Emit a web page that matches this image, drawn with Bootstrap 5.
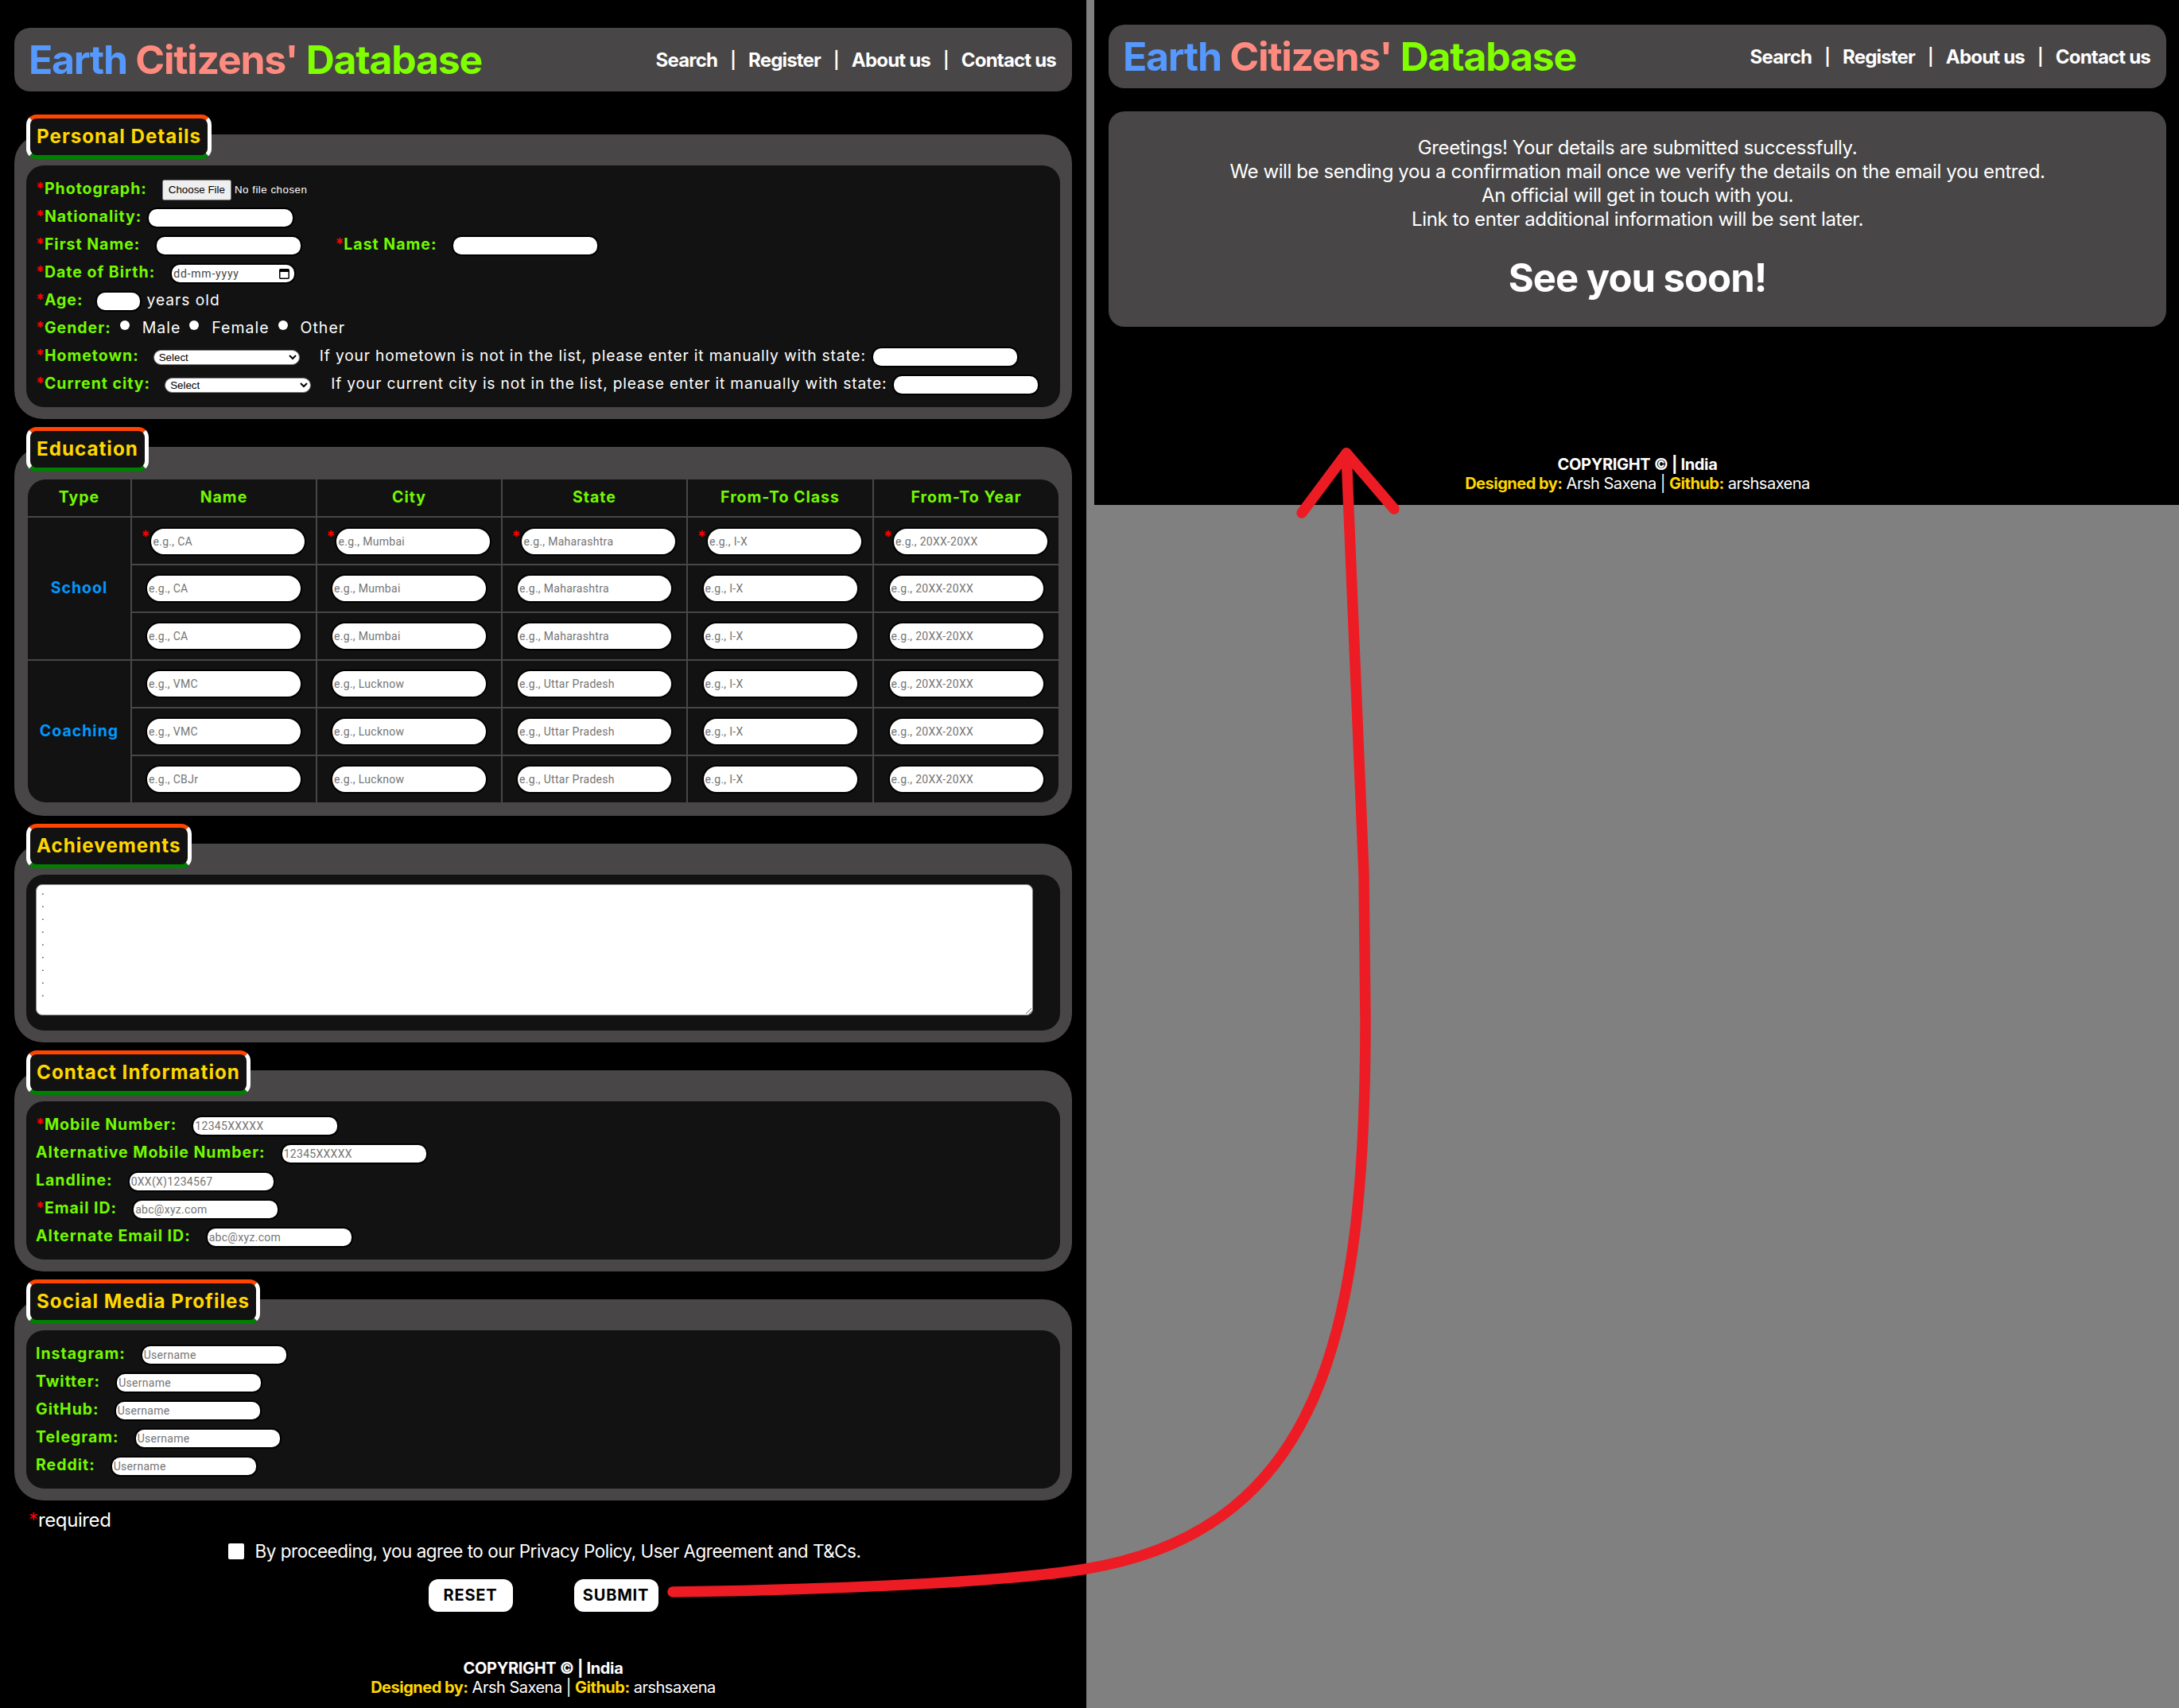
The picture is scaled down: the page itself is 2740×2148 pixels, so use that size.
<!DOCTYPE html>
<html lang="en">
<head>
  <meta charset="UTF-8">
  <title>Earth Citizens' Database</title>
  <meta name="viewport" content="width=device-width, initial-scale=1">
  <link href="https://cdn.jsdelivr.net/npm/bootstrap@5.3.3/dist/css/bootstrap.min.css" rel="stylesheet">
  <style>
    body { width: 2740px; height: 2148px; background: #808080; font-family: Inter, "Liberation Sans", sans-serif; color: #fff; position: relative; overflow: hidden; }
    .pane-left { width: 1366px; height: 2148px; background: #000; padding: 35px 18px 0; flex: none; }
    .pane-right { width: 1364px; height: 635px; background: #000; padding: 31px 16px 0 18px; margin-left: 10px; flex: none; }

    .top-bar { height: 80px; background: #484646; border-radius: 20px; padding: 0 20px 0 18px; }
    .brand { font-size: 50px; font-weight: 700; letter-spacing: -1.3px; line-height: 1; }
    .c-blue { color: #5599ff; }
    .c-salmon { color: #ff8a80; }
    .c-lime { color: #7fff00; }
    .top-links { font-size: 24px; font-weight: 700; letter-spacing: -0.8px; gap: 16px; padding-top: 2px; }
    .top-links a { color: #fff; text-decoration: none; }
    .top-links .sep { color: #fff; font-size: 21px; font-weight: 600; }

    .sec-block { margin-top: 10px; }
    .sec-block.first { margin-top: 29px; }
    .sec-title { position: relative; z-index: 1; width: fit-content; height: 56px; margin: 0 0 -31px 15px; padding: 0 8px; font-size: 24.2px; font-weight: 700; letter-spacing: 1px; line-height: 46px; color: #ffd700; background: #121212; border: 5px solid #fff; border-top-color: #ff4500; border-bottom-color: #008000; border-radius: 13px; }
    .sec-panel { background: #484646; border-radius: 36px; padding: 39px 15px 15px; }
    .sec-inner { background: #121212; border-radius: 22px; padding: 12px; }

    .fld-row { height: 35px; font-size: 19.5px; letter-spacing: 1px; white-space: nowrap; }
    .lbl { font-weight: 700; color: #72f900; }
    .star { color: #f00; font-weight: 700; letter-spacing: 0; }
    .fld { width: 185px; height: 26px; margin: 3px 0 0 19px; padding: 0 2px; background: #fff; border: 2px solid #000; border-radius: 12px; font-family: Roboto, sans-serif; font-size: 14px; letter-spacing: 0.3px; outline: 0; }
    .fld.tight { margin-left: 7px; }
    .fld.age { width: 58px; margin-left: 16px; }
    .after-first { margin-left: 41px; }
    .file-pick { margin: 3px 0 0 19px; width: 190px; font-family: "Liberation Sans", sans-serif; font-size: 13.33px; letter-spacing: 0.5px; color: #fff; }
    .file-pick::file-selector-button { letter-spacing: 0; padding: 1px 6px; }
    .date-box { width: 158px; height: 26px; margin: 3px 0 0 19px; padding: 0 6px 0 2px; background: #fff; border: 2px solid #000; border-radius: 12px; }
    .date-box input { width: 125px; border: 0; padding: 0; background: none; font-family: Roboto, sans-serif; font-size: 14px; letter-spacing: 0.8px; color: #444; outline: 0; }
    .pick-radio { appearance: none; width: 12px; height: 12px; margin: 0 0 8px 11px; background: #fff; border-radius: 50%; flex: none; }
    .opt-text { margin-left: 16px; }
    .pick-sel { width: 184px; height: 19px; margin: 3px 0 0 18px; padding: 0 2px; background: #fff; border: 1px solid #777; border-radius: 10px; font-family: "Liberation Sans", sans-serif; font-size: 13.33px; letter-spacing: 0; color: #000; }
    .note-text { margin-left: 25px; font-size: 19.2px; letter-spacing: 0.85px; }
    .age-unit { margin-left: 6px; font-size: 19.2px; }

    .edu-grid { table-layout: fixed; width: 1300px; border-collapse: separate; border-spacing: 2px; font-size: 19.5px; letter-spacing: 1px; }
    .edu-grid th, .edu-grid td { background: #121212; padding: 0; text-align: center; vertical-align: middle; }
    .edu-grid th { height: 46px; font-weight: 700; color: #72f900; }
    .edu-grid td { height: 58px; white-space: nowrap; }
    .edu-grid td.kind { font-weight: 700; color: #0099ff; }
    .edu-grid tr:first-child th:first-child { border-top-left-radius: 22px; }
    .edu-grid tr:first-child th:last-child { border-top-right-radius: 22px; }
    .edu-grid td.kind.end { border-bottom-left-radius: 22px; }
    .edu-grid tbody tr:last-child td:last-child { border-bottom-right-radius: 22px; }
    .cell-in { width: 197px; height: 36px; padding: 0 2px; background: #fff; border: 2px solid #000; border-radius: 18px; font-family: Roboto, sans-serif; font-size: 14px; letter-spacing: 0.3px; vertical-align: middle; outline: 0; }
    .cell-star { vertical-align: 4px; margin-right: 0; }

    .ach-box { display: block; width: 1254px; height: 165px; padding: 0 6px; background: #fff; border: 1px solid #888; border-radius: 8px; font-family: "Liberation Sans", sans-serif; font-size: 13px; line-height: 16px; color: #113; outline: 0; }
    .sec-inner.ach { padding: 12px 12px 19px; }

    .req-line { margin: 8px 0 0 18px; font-size: 24px; line-height: 34px; letter-spacing: -0.4px; }
    .agree-line { margin: 5px 0 0 3px; font-size: 22.4px; line-height: 34px; letter-spacing: -0.45px; gap: 14px; }
    .agree-box { appearance: none; width: 20px; height: 20px; background: #fff; border-radius: 2px; flex: none; }
    .act-row { margin-top: 18px; gap: 77px; }
    .act-btn { width: 106px; height: 41px; padding: 0; background: #fff; border: 0; border-radius: 12px; color: #000; font-size: 20px; font-weight: 700; letter-spacing: 0.8px; line-height: 41px; }

    .foot-note { font-size: 20px; line-height: 24px; letter-spacing: -0.35px; }
    .foot-note .line-two { letter-spacing: -0.5px; }
    .pane-left .foot-note { margin-top: 59px; }
    .pane-right .foot-note { margin-top: 161px; }
    .foot-note b { font-weight: 700; }
    .c-gold { color: #ffd700; }

    .done-card { margin-top: 29px; height: 271px; padding-top: 31px; background: #484646; border-radius: 20px; font-size: 24px; line-height: 30px; letter-spacing: -0.4px; }
    .done-big { margin-top: 29px; font-size: 49px; font-weight: 700; line-height: 60px; letter-spacing: -1px; }

    .red-arrow { position: absolute; left: 0; top: 0; pointer-events: none; }
  </style>
</head>
<body class="d-flex align-items-start">

  <div class="pane-left">
    <div class="top-bar d-flex justify-content-between align-items-center">
      <div class="brand"><span class="c-blue">Earth</span> <span class="c-salmon">Citizens'</span> <span class="c-lime">Database</span></div>
      <div class="top-links d-flex align-items-center">
        <a href="#">Search</a><span class="sep">|</span><a href="#">Register</a><span class="sep">|</span><a href="#">About us</a><span class="sep">|</span><a href="#">Contact us</a>
      </div>
    </div>

    <form>
      <div class="sec-block first">
        <div class="sec-title">Personal Details</div>
        <div class="sec-panel">
          <div class="sec-inner">
            <div class="fld-row d-flex align-items-center"><span class="lbl"><span class="star">*</span>Photograph:</span><input class="file-pick" type="file"></div>
            <div class="fld-row d-flex align-items-center"><span class="lbl"><span class="star">*</span>Nationality:</span><input class="fld tight" type="text"></div>
            <div class="fld-row d-flex align-items-center"><span class="lbl"><span class="star">*</span>First Name:</span><input class="fld" type="text"><span class="lbl after-first"><span class="star">*</span>Last Name:</span><input class="fld" type="text"></div>
            <div class="fld-row d-flex align-items-center"><span class="lbl"><span class="star">*</span>Date of Birth:</span><div class="date-box d-flex align-items-center justify-content-between"><input type="text" value="dd-mm-yyyy"><svg width="13" height="14" viewBox="0 0 13 14"><rect x="0.75" y="1.75" width="11.5" height="11.5" rx="1" fill="none" stroke="#000" stroke-width="1.5"/><path d="M1 1h11v4H1z" fill="#000"/></svg></div></div>
            <div class="fld-row d-flex align-items-center"><span class="lbl"><span class="star">*</span>Age:</span><input class="fld age" type="text"><span class="age-unit">years old</span></div>
            <div class="fld-row d-flex align-items-center"><span class="lbl"><span class="star">*</span>Gender:</span><input class="pick-radio" type="radio" name="gender"><span class="opt-text">Male</span><input class="pick-radio" type="radio" name="gender"><span class="opt-text">Female</span><input class="pick-radio" type="radio" name="gender"><span class="opt-text">Other</span></div>
            <div class="fld-row d-flex align-items-center"><span class="lbl"><span class="star">*</span>Hometown:</span><select class="pick-sel"><option>Select</option></select><span class="note-text">If your hometown is not in the list, please enter it manually with state:</span><input class="fld tight" type="text"></div>
            <div class="fld-row d-flex align-items-center"><span class="lbl"><span class="star">*</span>Current city:</span><select class="pick-sel"><option>Select</option></select><span class="note-text">If your current city is not in the list, please enter it manually with state:</span><input class="fld tight" type="text"></div>
          </div>
        </div>
      </div>

      <div class="sec-block">
        <div class="sec-title">Education</div>
        <div class="sec-panel">
          <table class="edu-grid" id="eduGrid">
            <colgroup><col style="width:129px"><col style="width:231px"><col style="width:231px"><col style="width:231px"><col style="width:232px"><col style="width:232px"></colgroup>
            <thead><tr><th>Type</th><th>Name</th><th>City</th><th>State</th><th>From-To Class</th><th>From-To Year</th></tr></thead>
            <tbody id="eduBody"></tbody>
          </table>
        </div>
      </div>

      <div class="sec-block">
        <div class="sec-title">Achievements</div>
        <div class="sec-panel">
          <div class="sec-inner ach">
            <textarea class="ach-box">.
.
.
.
.
.
.
.
.</textarea>
          </div>
        </div>
      </div>

      <div class="sec-block">
        <div class="sec-title">Contact Information</div>
        <div class="sec-panel">
          <div class="sec-inner">
            <div class="fld-row d-flex align-items-center"><span class="lbl"><span class="star">*</span>Mobile Number:</span><input class="fld" type="text" placeholder="12345XXXXX"></div>
            <div class="fld-row d-flex align-items-center"><span class="lbl">Alternative Mobile Number:</span><input class="fld" type="text" placeholder="12345XXXXX"></div>
            <div class="fld-row d-flex align-items-center"><span class="lbl">Landline:</span><input class="fld" type="text" placeholder="0XX(X)1234567"></div>
            <div class="fld-row d-flex align-items-center"><span class="lbl"><span class="star">*</span>Email ID:</span><input class="fld" type="text" placeholder="abc@xyz.com"></div>
            <div class="fld-row d-flex align-items-center"><span class="lbl">Alternate Email ID:</span><input class="fld" type="text" placeholder="abc@xyz.com"></div>
          </div>
        </div>
      </div>

      <div class="sec-block">
        <div class="sec-title">Social Media Profiles</div>
        <div class="sec-panel">
          <div class="sec-inner">
            <div class="fld-row d-flex align-items-center"><span class="lbl">Instagram:</span><input class="fld" type="text" placeholder="Username"></div>
            <div class="fld-row d-flex align-items-center"><span class="lbl">Twitter:</span><input class="fld" type="text" placeholder="Username"></div>
            <div class="fld-row d-flex align-items-center"><span class="lbl">GitHub:</span><input class="fld" type="text" placeholder="Username"></div>
            <div class="fld-row d-flex align-items-center"><span class="lbl">Telegram:</span><input class="fld" type="text" placeholder="Username"></div>
            <div class="fld-row d-flex align-items-center"><span class="lbl">Reddit:</span><input class="fld" type="text" placeholder="Username"></div>
          </div>
        </div>
      </div>

      <div class="req-line"><span class="star fw-normal">*</span>required</div>
      <div class="agree-line d-flex justify-content-center align-items-center"><input class="agree-box" type="checkbox"><span>By proceeding, you agree to our Privacy Policy, User Agreement and T&amp;Cs.</span></div>
      <div class="act-row d-flex justify-content-center">
        <button type="reset" class="btn act-btn">RESET</button>
        <button type="button" class="btn act-btn">SUBMIT</button>
      </div>
    </form>

    <div class="foot-note text-center">
      <div><b>COPYRIGHT &copy; | India</b></div>
      <div class="line-two"><b class="c-gold">Designed by:</b> Arsh Saxena | <b class="c-gold">Github:</b> arshsaxena</div>
    </div>
  </div>

  <div class="pane-right">
    <div class="top-bar d-flex justify-content-between align-items-center">
      <div class="brand"><span class="c-blue">Earth</span> <span class="c-salmon">Citizens'</span> <span class="c-lime">Database</span></div>
      <div class="top-links d-flex align-items-center">
        <a href="#">Search</a><span class="sep">|</span><a href="#">Register</a><span class="sep">|</span><a href="#">About us</a><span class="sep">|</span><a href="#">Contact us</a>
      </div>
    </div>
    <div class="done-card text-center">
      <div>Greetings! Your details are submitted successfully.</div>
      <div>We will be sending you a confirmation mail once we verify the details on the email you entred.</div>
      <div>An official will get in touch with you.</div>
      <div>Link to enter additional information will be sent later.</div>
      <div class="done-big">See you soon!</div>
    </div>
    <div class="foot-note text-center">
      <div><b>COPYRIGHT &copy; | India</b></div>
      <div class="line-two"><b class="c-gold">Designed by:</b> Arsh Saxena | <b class="c-gold">Github:</b> arshsaxena</div>
    </div>
  </div>

  <!-- red hand-drawn arrow from submit to the result page -->
  <svg class="red-arrow" width="2740" height="2148" viewBox="0 0 2740 2148" fill="none" stroke="#ed1c24" stroke-width="13.5" stroke-linecap="round" stroke-linejoin="round">
    <path d="M846 2002C1000 2000 1250 1992 1366 1973C1516 1948 1610 1870 1661 1736C1699 1636 1717 1500 1717 1282L1715 1100L1693 570"/>
    <path d="M1637 645L1693 570L1753 640"/>
  </svg>

  <script>
    // education rows, first school row is the required one
    const eduRows = [
      ["School", "e.g., CA", "e.g., Mumbai", "e.g., Maharashtra", true],
      ["School", "e.g., CA", "e.g., Mumbai", "e.g., Maharashtra", false],
      ["School", "e.g., CA", "e.g., Mumbai", "e.g., Maharashtra", false],
      ["Coaching", "e.g., VMC", "e.g., Lucknow", "e.g., Uttar Pradesh", false],
      ["Coaching", "e.g., VMC", "e.g., Lucknow", "e.g., Uttar Pradesh", false],
      ["Coaching", "e.g., CBJr", "e.g., Lucknow", "e.g., Uttar Pradesh", false]
    ];
    const eduBody = document.getElementById("eduBody");
    eduRows.forEach((r, i) => {
      const star = r[4] ? '<span class="star cell-star">*</span>' : "";
      const cells = [r[1], r[2], r[3], "e.g., I-X", "e.g., 20XX-20XX"]
        .map(p => `<td>${star}<input class="cell-in" type="text" placeholder="${p}"></td>`).join("");
      const kind = i % 3 === 0 ? `<td class="kind${i === 3 ? " end" : ""}" rowspan="3">${r[0]}</td>` : "";
      eduBody.insertAdjacentHTML("beforeend", `<tr>${kind}${cells}</tr>`);
    });
  </script>
  <script src="https://cdn.jsdelivr.net/npm/bootstrap@5.3.3/dist/js/bootstrap.bundle.min.js"></script>
</body>
</html>
